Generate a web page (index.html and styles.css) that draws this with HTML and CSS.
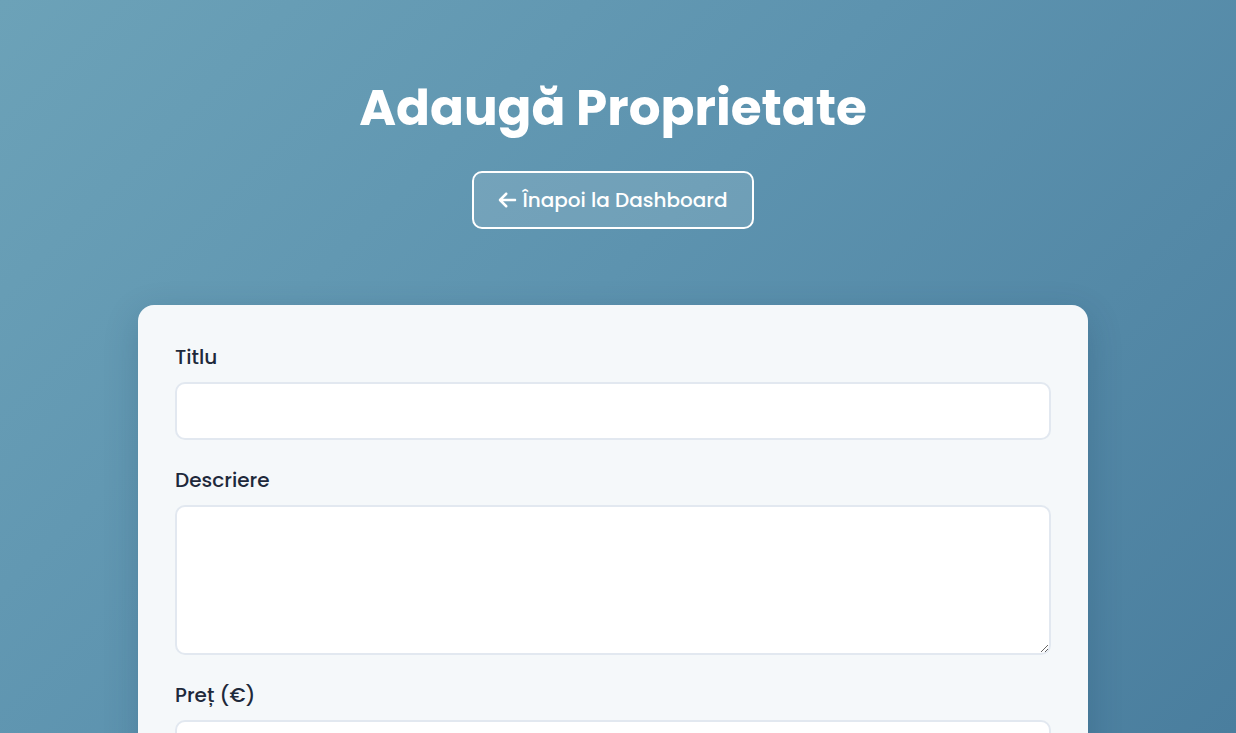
FILE: index.html
```html
<!DOCTYPE html>
<html lang="ro">
<head>
<meta charset="utf-8">
<title>Adaugă Proprietate</title>
<link rel="stylesheet" href="styles.css">
</head>
<body>
<div class="page">
  <header class="header">
    <h1 class="title">Adaugă Proprietate</h1>
    <a class="back-btn" href="#">
      <svg class="back-icon" viewBox="0 0 448 512" aria-hidden="true"><path fill="currentColor" d="M9.4 233.4c-12.5 12.5-12.5 32.8 0 45.3l160 160c12.5 12.5 32.8 12.5 45.3 0s12.5-32.8 0-45.3L109.2 288H416c17.7 0 32-14.3 32-32s-14.3-32-32-32H109.3L214.6 118.6c12.5-12.5 12.5-32.8 0-45.3s-32.8-12.5-45.3 0l-160 160z"/></svg>
      <span>Înapoi la Dashboard</span>
    </a>
  </header>
  <form class="card">
    <div class="group">
      <label class="label" for="titlu">Titlu</label>
      <input class="input" id="titlu" type="text">
    </div>
    <div class="group">
      <label class="label" for="descriere">Descriere</label>
      <textarea class="input textarea" id="descriere"></textarea>
    </div>
    <div class="group">
      <label class="label" for="pret">Preț (€)</label>
      <input class="input" id="pret" type="number">
    </div>
  </form>
</div>
</body>
</html>
```
FILE: styles.css
```css
* { box-sizing: border-box; }
html, body { margin: 0; height: 100%; }
body {
  font-family: Poppins, Inter, "DejaVu Sans", sans-serif;
  background: linear-gradient(135deg, #6ca2b8 0%, #5d93af 45%, #4a7e9e 100%);
  background-attachment: fixed;
  min-height: 100vh;
  overflow: hidden;
}
.page {
  padding: 0 10px 40px 0;
}
.header {
  display: flex;
  flex-direction: column;
  align-items: center;
  padding-top: 74px;
}
.title {
  margin: 0;
  color: #fff;
  font-size: 50px;
  font-weight: 700;
  line-height: 68px;
}
.back-btn {
  margin-top: 29px;
  display: inline-flex;
  align-items: center;
  gap: 5px;
  height: 58px;
  padding: 0 24px;
  border: 2px solid #fff;
  border-radius: 10px;
  background: rgba(255, 255, 255, 0.12);
  color: #fff;
  text-decoration: none;
  font-size: 20px;
  font-weight: 500;
}
.back-icon { width: 19px; height: 20px; }
.card {
  width: 950px;
  margin: 76px auto 0;
  background: #f5f8fa;
  border-radius: 16px;
  padding: 39px 37px;
  box-shadow: 0 10px 35px rgba(20, 50, 80, 0.2);
}
.group { margin-bottom: 27px; }
.label {
  display: block;
  color: #1e293b;
  font-size: 20px;
  font-weight: 500;
  line-height: 27px;
  margin-bottom: 11px;
}
.input {
  display: block;
  width: 100%;
  height: 58px;
  border: 2px solid #e2e8f0;
  border-radius: 10px;
  background: #fff;
  font-family: inherit;
  font-size: 16px;
  padding: 0 16px;
}
.textarea {
  height: 150px;
  padding: 14px 16px;
  resize: vertical;
}
```
